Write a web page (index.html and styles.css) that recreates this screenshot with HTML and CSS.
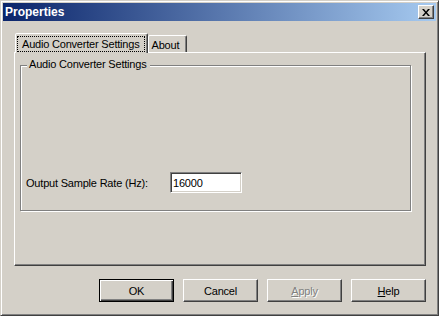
FILE: index.html
```html
<!DOCTYPE html>
<html lang="en">

<head>
    <meta charset="UTF-8">
    <meta name="viewport" content="width=device-width, initial-scale=1.0">
    <title>Properties</title>
    <link rel="stylesheet" href="styles.css">
</head>

<body>
    <div class="window">
        <div class="titlebar">
            <span class="title">Properties</span>
            <button class="close" aria-label="Close">
                <svg width="8" height="7" viewBox="0 0 8 7">
                    <path d="M0 0h2l2 2.5 2-2.5h2l-3 3.5 3 3.5h-2l-2-2.5-2 2.5h-2l3-3.5z" fill="#000"/>
                </svg>
            </button>
        </div>

        <div class="sheet">
            <div class="tabs">
                <div class="tab active"><span class="focus">Audio Converter Settings</span></div>
                <div class="tab">About</div>
            </div>

            <div class="panel">
                <div class="group">
                    <div class="group-title">Audio Converter Settings</div>
                    <div class="field">
                        <label class="field-label" for="rate">Output Sample Rate (Hz):</label>
                        <input class="field-input" id="rate" type="text" value="16000">
                    </div>
                </div>
            </div>

            <div class="buttons">
                <button class="btn default">OK</button>
                <button class="btn">Cancel</button>
                <button class="btn disabled"><u>A</u>pply</button>
                <button class="btn"><u>H</u>elp</button>
            </div>
        </div>
    </div>
</body>

</html>
```

FILE: styles.css
```css
body {
    margin: 0;
    background: #d4d0c8;
    font-family: "Liberation Sans", Arial, sans-serif;
    font-size: 11px;
    letter-spacing: -0.2px;
    color: #000;
}

.window {
    box-sizing: border-box;
    width: 439px;
    height: 316px;
    padding: 2px;
    background: #d4d0c8;
    border: 1px solid;
    border-color: #d4d0c8 #404040 #404040 #d4d0c8;
    box-shadow: inset 1px 1px 0 #fff, inset -1px -1px 0 #808080;
}

.titlebar {
    height: 18px;
    display: flex;
    align-items: center;
    justify-content: space-between;
    padding: 0 2px 0 2px;
    background: linear-gradient(to right, #0a246a, #a6caf0);
}

.title {
    color: #fff;
    font-weight: bold;
    font-size: 12px;
    letter-spacing: 0;
}

.close {
    box-sizing: border-box;
    width: 16px;
    height: 14px;
    padding: 0;
    display: flex;
    align-items: center;
    justify-content: center;
    background: #d4d0c8;
    border: 1px solid;
    border-color: #fff #404040 #404040 #fff;
    box-shadow: inset -1px -1px 0 #808080;
}

.sheet {
    padding: 12px 10px 0 11px;
}

.tabs {
    display: flex;
    align-items: flex-end;
    padding-left: 1px;
}

.tab {
    box-sizing: border-box;
    height: 17px;
    padding: 3px 7px 0 3px;
    line-height: 13px;
    border: 1px solid;
    border-bottom: none;
    border-color: #fff #404040 transparent #fff;
    border-radius: 2px 2px 0 0;
    box-shadow: inset -1px 0 0 #808080;
    background: #d4d0c8;
}

.tab.active {
    position: relative;
    z-index: 1;
    height: 20px;
    margin-bottom: -1px;
    padding: 2px 2px 0 1px;
}

.focus {
    display: block;
    line-height: 14px;
    padding: 0 4px;
    border: 1px dotted #000;
}

.panel {
    box-sizing: border-box;
    height: 214px;
    padding: 12px 14px 0 5px;
    border: 1px solid;
    border-color: #fff #404040 #404040 #fff;
    box-shadow: inset -1px -1px 0 #808080;
}

.group {
    box-sizing: border-box;
    height: 146px;
    display: flex;
    flex-direction: column;
    justify-content: space-between;
    padding: 0 5px 17px 5px;
    border: 1px solid #808080;
    box-shadow: 1px 1px 0 #fff, inset 1px 1px 0 #fff;
}

.group-title {
    align-self: flex-start;
    margin: -8px 0 0 1px;
    padding: 0 3px 0 2px;
    line-height: 13px;
    background: #d4d0c8;
}

.field {
    display: flex;
    align-items: center;
}

.field-label {
    width: 144px;
}

.field-input {
    box-sizing: border-box;
    width: 72px;
    height: 21px;
    padding: 0 2px;
    font: inherit;
    letter-spacing: inherit;
    background: #fff;
    border: 1px solid;
    border-color: #808080 #fff #fff #808080;
    box-shadow: inset 1px 1px 0 #404040, inset -1px -1px 0 #d4d0c8;
    outline: none;
}

.buttons {
    display: flex;
    justify-content: flex-end;
    gap: 9px;
    padding-top: 13px;
}

.btn {
    box-sizing: border-box;
    width: 75px;
    height: 23px;
    padding: 0;
    font: inherit;
    letter-spacing: inherit;
    color: #000;
    background: #d4d0c8;
    border: 1px solid;
    border-color: #fff #404040 #404040 #fff;
    box-shadow: inset -1px -1px 0 #808080;
}

.btn.default {
    border-color: #000;
    box-shadow: inset 1px 1px 0 #fff, inset -1px -1px 0 #404040, inset -2px -2px 0 #808080;
}

.btn.disabled {
    color: #808080;
    text-shadow: 1px 1px 0 #fff;
}
```
